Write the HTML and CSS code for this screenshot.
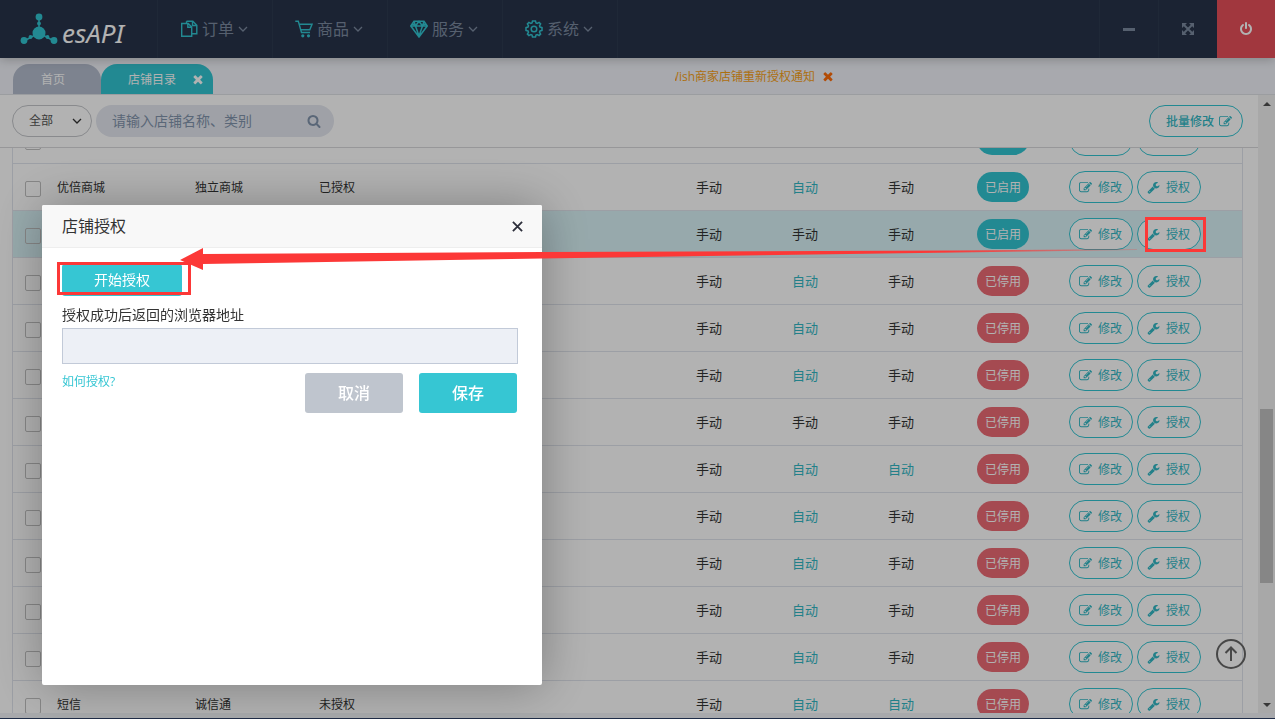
FILE: index.html
```html
<!DOCTYPE html>
<html lang="zh-CN">
<head>
<meta charset="utf-8">
<meta name="viewport" content="width=device-width, initial-scale=1">
<title>esAPI - 店铺目录</title>
<link rel="stylesheet" href="styles.css">
</head>
<body>
<svg class="sprite" aria-hidden="true">
  <symbol id="i-edit" viewBox="0 0 1792 1792"><path d="M888 1184l116-116-152-152-116 116v56h96v96h56zm440-720q-16-16-33 1l-350 350q-17 17-1 33t33-1l350-350q17-17 1-33zm80 594v190q0 119-84.500 203.500t-203.500 84.500h-832q-119 0-203.500-84.500t-84.500-203.500v-832q0-119 84.500-203.500t203.500-84.500h832q63 0 117 25 15 7 18 23 3 17-9 29l-49 49q-14 14-32 8-23-6-45-6h-832q-66 0-113 47t-47 113v832q0 66 47 113t113 47h832q66 0 113-47t47-113v-126q0-13 9-22l64-64q15-15 35-7t20 29zm-96-738l288 288-672 672h-288v-288zm444 132l-92 92-288-288 92-92q28-28 68-28t68 28l152 152q28 28 28 68t-28 68z"/></symbol>
  <symbol id="i-wrench" viewBox="0 0 1792 1792"><path d="M448 1472q0-26-19-45t-45-19-45 19-19 45 19 45 45 19 45-19 19-45zm644-420l-682 682q-37 37-90 37-52 0-91-37l-106-108q-38-36-38-90 0-53 38-91l681-681q39 98 114.500 173.500t173.500 114.500zm634-435q0 39-23 106-47 134-164.500 217.500t-258.500 83.500q-185 0-316.500-131.500t-131.500-316.500 131.500-316.500 316.500-131.500q58 0 121.500 16.500t107.500 46.500q16 11 16 28t-16 28l-293 169v224l193 107q5-3 79-48.500t135.500-81 70.500-35.500q15 0 23.500 10t8.500 25z"/></symbol>
  <symbol id="i-search" viewBox="0 0 1792 1792"><path d="M1216 832q0-185-131.500-316.500t-316.500-131.500-316.500 131.500-131.500 316.500 131.500 316.500 316.500 131.500 316.500-131.500 131.500-316.500zm512 832q0 52-38 90t-90 38q-54 0-90-38l-343-342q-179 124-399 124-143 0-273.500-55.500t-225-150-150-225-55.500-273.500 55.500-273.500 150-225 225-150 273.500-55.500 273.500 55.500 225 150 150 225 55.500 273.500q0 220-124 399l343 343q37 37 37 90z"/></symbol>
  <symbol id="i-times" viewBox="240 340 1312 1312"><path d="M1490 1322q0 40-28 68l-136 136q-28 28-68 28t-68-28l-294-294-294 294q-28 28-68 28t-68-28l-136-136q-28-28-28-68t28-68l294-294-294-294q-28-28-28-68t28-68l136-136q28-28 68-28t68 28l294 294 294-294q28-28 68-28t68 28l136 136q28 28 28 68t-28 68l-294 294 294 294q28 28 28 68z"/></symbol>
  <symbol id="i-power" viewBox="0 0 1792 1792"><path d="M1664 896q0 156-61 298t-164 245-245 164-298 61-298-61-245-164-164-245-61-298q0-182 80.500-343t226.500-270q43-32 95.500-25t83.500 50q32 42 24.500 94.500t-49.500 84.500q-98 74-151.500 181t-53.500 228q0 104 40.500 198.500t109.500 163.500 163.500 109.500 198.500 40.500 198.500-40.500 163.500-109.500 109.500-163.500 40.500-198.500q0-121-53.500-228t-151.500-181q-42-32-49.500-84.500t24.500-94.500q31-43 84-50t95 25q146 109 226.500 270t80.500 343zm-640-768v640q0 52-38 90t-90 38-90-38-38-90v-640q0-52 38-90t90-38 90 38 38 90z"/></symbol>
  <symbol id="i-expand" viewBox="0 0 14 14"><path d="M1 1h5L1 6zM13 1v5L8 1zM1 13V8l5 5zM13 13H8l5-5z"/><path d="M3 3l8 8M11 3l-8 8" fill="none" stroke="currentColor" stroke-width="2"/></symbol>
  <symbol id="i-chevron" viewBox="0 0 10 10"><path d="M1 3l4 4 4-4" fill="none" stroke="currentColor" stroke-width="1.300"/></symbol>
  <symbol id="i-docs" viewBox="0 0 18 18"><path d="M5.500 3.500H1.700v12.800h10V14M6.500 1.200h6.300L16.800 5.200v8.600H11.700V7L8.200 3.500H5.500M6.500 1.200v2.300M12.500 1.200v4.300h4.300M7.800 3.500v3.700h3.900" fill="none" stroke="currentColor" stroke-width="1.400"/></symbol>
  <symbol id="i-cart" viewBox="0 0 18 18"><path d="M.300 1.300H3.300L6.500 12.500H15M4.100 4.300H17L14.800 9.800H5.800" fill="none" stroke="currentColor" stroke-width="1.400"/><circle cx="7.800" cy="15.800" r="1.600"/><circle cx="13.500" cy="15.800" r="1.600"/></symbol>
  <symbol id="i-gem" viewBox="0 0 18 18"><path d="M4 1.200h10L17.200 6 9 17 .800 6zM.800 6h16.400M5.500 6L9 16l3.500-10M4 1.200L5.500 6 9 1.200 12.500 6 14 1.200M2.500 3.500L5.500 6M15.500 3.500L12.500 6" fill="none" stroke="currentColor" stroke-width="1.500"/></symbol>
  <symbol id="i-gear" viewBox="0 0 18 18"><g fill="none" stroke="currentColor" stroke-width="1.500"><path d="M7.500 1h3l.5 2 1.200.5 1.900-1.100 1.500 1.500-1.100 1.900.5 1.200 2 .5v3l-2 .5-.5 1.200 1.100 1.900-1.500 1.500-1.900-1.100-1.200.5-.5 2h-3l-.5-2-1.200-.5-1.900 1.100-1.500-1.500 1.100-1.900L3 11l-2-.5v-3L3 7l.5-1.200-1.100-1.900 1.500-1.500 1.900 1.100L7 3z"/><circle cx="9" cy="9" r="2.800"/></g></symbol>
</svg>

<header class="topbar">
  <a class="logo" href="#">
    <svg class="logo-mark" viewBox="0 0 38 32" aria-hidden="true">
      <path d="M19 3v16M19 20L4 28M19 20l15 8" stroke="currentColor" stroke-width="1.500"/>
      <circle cx="19" cy="20" r="6.500"/><circle cx="19" cy="4" r="3.400"/><circle cx="19" cy="10.500" r="1.900"/>
      <circle cx="4" cy="27.500" r="3.400"/><circle cx="10.500" cy="24" r="1.900"/><circle cx="34" cy="27.500" r="3.400"/><circle cx="27.500" cy="24" r="1.900"/>
    </svg>
    <span>esAPI</span>
  </a>
  <nav class="menu">
    <a href="#"><svg><use href="#i-docs"/></svg><span>订单</span><svg class="chev"><use href="#i-chevron"/></svg></a>
    <a href="#"><svg><use href="#i-cart"/></svg><span>商品</span><svg class="chev"><use href="#i-chevron"/></svg></a>
    <a href="#"><svg><use href="#i-gem"/></svg><span>服务</span><svg class="chev"><use href="#i-chevron"/></svg></a>
    <a href="#"><svg><use href="#i-gear"/></svg><span>系统</span><svg class="chev"><use href="#i-chevron"/></svg></a>
  </nav>
  <div class="window-tools">
    <button type="button" aria-label="最小化"><i class="minus"></i></button>
    <button type="button" aria-label="全屏"><svg><use href="#i-expand"/></svg></button>
    <button type="button" class="exit" aria-label="退出"><svg><use href="#i-power"/></svg></button>
  </div>
</header>

<div class="tabbar">
  <a class="tab" href="#">首页</a>
  <div class="tab active"><a href="#">店铺目录</a><button type="button" aria-label="关闭标签"><svg><use href="#i-times"/></svg></button></div>
  <div class="notice"><a href="#">Wish商家店铺重新授权通知</a><button type="button" aria-label="关闭通知"><svg><use href="#i-times"/></svg></button></div>
</div>

<div class="workspace">
  <main class="page">
    <form class="toolbar">
      <div class="select-box"><select aria-label="类别"><option>全部</option></select><svg><use href="#i-chevron"/></svg></div>
      <div class="search"><input type="text" aria-label="搜索店铺" placeholder="请输入店铺名称、类别"><button type="button" aria-label="搜索"><svg><use href="#i-search"/></svg></button></div>
      <button type="button" class="pill batch">批量修改<svg><use href="#i-edit"/></svg></button>
    </form>
    <div class="list">
      <table>
        <colgroup><col class="c-check"><col class="c-name"><col class="c-type"><col><col class="c-mode"><col class="c-mode"><col class="c-mode-last"><col class="c-status"><col class="c-actions"></colgroup>
        <tbody id="shops"></tbody>
      </table>
    </div>
  </main>
  <div class="scrollbar" aria-hidden="true"><i class="up"></i><div class="track"><i class="before"></i><i class="thumb"></i><i class="after"></i></div><i class="down"></i></div>
</div>
<footer class="statusbar"></footer>

<button type="button" class="to-top" aria-label="回到顶部"><svg viewBox="0 0 32 32"><g fill="none" stroke="currentColor" stroke-width="2"><circle cx="16" cy="16" r="14"/><path d="M16 23V10M10.500 15L16 9.500l5.500 5.500"/></g></svg></button>

<div class="shade"></div>

<section class="dialog" role="dialog" aria-labelledby="dialog-title">
  <header><h1 id="dialog-title">店铺授权</h1><button type="button" aria-label="关闭"><svg viewBox="0 0 12 12"><path d="M1 1l10 10M11 1L1 11" stroke="currentColor" stroke-width="2"/></svg></button></header>
  <form class="dialog-body">
    <button type="button" class="start">开始授权</button>
    <label for="return-url">授权成功后返回的浏览器地址</label>
    <input id="return-url" type="text">
    <div class="dialog-foot">
      <a href="#">如何授权?</a>
      <button type="button" class="cancel">取消</button>
      <button type="button" class="save">保存</button>
    </div>
  </form>
</section>

<div class="mark mark-start"></div>
<div class="mark mark-row"></div>
<svg class="arrow" viewBox="0 0 960 24" aria-hidden="true">
  <defs><linearGradient id="fade"><stop offset="0.800" stop-color="#fc3837"/><stop offset="1" stop-color="#fc3837" stop-opacity="0.200"/></linearGradient></defs>
  <path fill="url(#fade)" d="M0 12L23 0v6L362 4 775 2.500 957 1v1L775 4.500 362 10.500 23 16v6z"/>
</svg>
<script src="app.js"></script>
</body>
</html>
```

FILE: app.js
```js
const A = '自动', M = '手动';
const shops = [
  { modes: [M, A, M], on: true },
  { name: '优倍商城', type: '独立商城', auth: '已授权', modes: [M, A, M], on: true },
  { modes: [M, M, M], on: true, selected: true },
  { modes: [M, A, M] },
  { modes: [M, A, M] },
  { modes: [M, A, M] },
  { modes: [M, M, M] },
  { modes: [M, A, A] },
  { modes: [M, A, M] },
  { modes: [M, A, M] },
  { modes: [M, A, M] },
  { modes: [M, A, M] },
  { name: '短信', type: '诚信通', auth: '未授权', modes: [M, A, A] }
];

document.getElementById('shops').innerHTML = shops.map(s => `
  <tr class="${s.selected ? 'selected' : ''}">
    <td><input type="checkbox" aria-label="选择店铺"></td>
    <td class="info">${s.name || ''}</td><td class="info">${s.type || ''}</td><td class="info">${s.auth || ''}</td>
    ${s.modes.map(m => `<td class="mode${m === A ? ' auto' : ''}">${m}</td>`).join('')}
    <td><button type="button" class="status${s.on ? ' on' : ''}">${s.on ? '已启用' : '已停用'}</button></td>
    <td><div class="actions">
      <button type="button" class="pill"><svg><use href="#i-edit"/></svg>修改</button>
      <button type="button" class="pill"><svg><use href="#i-wrench"/></svg>授权</button>
    </div></td>
  </tr>`).join('');
```

FILE: styles.css
```css
* { box-sizing: border-box; }

body {
  margin: 0;
  height: 100vh;
  display: flex;
  flex-direction: column;
  overflow: hidden;
  background: #fff;
  color: #333;
  font: 12px/18px "Open Sans", "Noto Sans CJK SC", sans-serif;
}

button, input, select { font: inherit; color: inherit; }
button { margin: 0; padding: 0; border: 0; background: none; cursor: pointer; }
a { color: inherit; text-decoration: none; }
svg { fill: currentColor; flex: none; }
.sprite { position: absolute; width: 0; height: 0; }

.topbar {
  position: relative;
  flex: none;
  display: flex;
  height: 58px;
  background: #283349;
  box-shadow: 0 1px 10px rgba(50, 50, 50, 0.3);
}
.logo {
  width: 158px;
  padding: 0 0 0 20px;
  display: flex;
  align-items: center;
  gap: 4px;
  border-right: 1px solid #2d3a50;
  color: #32c5d2;
}
.logo-mark { width: 38px; height: 32px; }
.logo span { color: #fff; font: italic 26px/32px "Noto Sans", sans-serif; padding-top: 8px; }
.menu { display: flex; }
.menu a {
  width: 115px;
  padding-left: 22px;
  display: flex;
  align-items: center;
  gap: 4px;
  border-right: 1px solid #2d3a50;
  color: #7b8aa0;
  font-size: 16px;
  line-height: 24px;
}
.menu svg { width: 18px; height: 18px; color: #32c5d2; }
.menu .chev { width: 10px; height: 10px; color: inherit; }
.window-tools { display: flex; margin-left: auto; }
.window-tools button {
  width: 59px;
  display: flex;
  align-items: center;
  justify-content: center;
  border-left: 1px solid #2d3a50;
  color: #7b8aa0;
}
.window-tools svg { width: 14px; height: 14px; }
.window-tools .exit { width: 58px; border: 0; background: #e7505a; color: #fff; }
.minus { width: 12px; height: 3px; background: currentColor; }

.tabbar {
  flex: none;
  display: flex;
  align-items: flex-end;
  height: 37px;
  padding-left: 13px;
  background: #f1f3f9;
  border-bottom: 1px solid #dfe1e5;
}
.tabbar svg { width: 10px; height: 10px; display: block; }
.tab {
  width: 88px;
  height: 30px;
  padding: 2px 8px 0 0;
  display: flex;
  align-items: center;
  justify-content: center;
  border-radius: 16px 16px 0 0;
  background: #b4bccd;
  color: #fff;
}
.tab.active { width: 112px; padding: 2px 10px 0 27px; justify-content: space-between; background: #32c5d2; }
.notice { margin: 0 auto; padding: 2px 0 0 20px; display: flex; align-items: center; gap: 8px; height: 36px; color: #f7a118; }
.notice a { width: 140px; display: flex; justify-content: flex-end; white-space: nowrap; overflow: hidden; }
.notice button { color: #ff6c0a; }

.workspace { flex: 1; min-height: 0; display: flex; }
.page { flex: 1; min-width: 0; display: flex; flex-direction: column; }
.toolbar {
  flex: none;
  display: flex;
  align-items: center;
  gap: 4px;
  height: 53px;
  padding: 0 15px 0 12px;
  border-bottom: 1px solid #d8d9db;
}
.select-box { position: relative; width: 80px; height: 32px; }
.select-box select {
  width: 100%;
  height: 100%;
  padding: 0 16px;
  appearance: none;
  border: 1px solid #c4c6ca;
  border-radius: 16px;
  background: #fff;
  color: #555;
}
.select-box svg { position: absolute; right: 10px; top: 11px; width: 10px; height: 10px; pointer-events: none; }
.search { width: 238px; height: 32px; padding: 0 13px 0 16px; display: flex; align-items: center; border-radius: 16px; background: #e4e7ef; color: #8294ac; }
.search input { flex: 1; min-width: 0; padding: 0; border: 0; outline: 0; background: none; font-size: 14px; line-height: 20px; }
.search input::placeholder { color: inherit; opacity: 1; }
.search svg { display: block; width: 14px; height: 14px; }

.pill {
  height: 32px;
  padding: 1px 10px 0 9px;
  display: flex;
  align-items: center;
  gap: 6px;
  border: 1px solid #32c5d2;
  border-radius: 16px;
  background: #fff;
  color: #32b8c5;
  white-space: nowrap;
}
.pill svg { width: 13px; height: 13px; }
.batch { margin-left: auto; padding: 1px 10px 0 16px; gap: 5px; font-weight: 500; }

.list { flex: 1; min-height: 0; padding: 0 15px 0 12px; overflow: hidden; }
.list table {
  width: 100%;
  margin-top: -31px;
  table-layout: fixed;
  border-collapse: separate;
  border-spacing: 0;
  border: solid #e0e4ec;
  border-width: 0 1px;
}
.list td { height: 47px; padding: 0 0 0 8px; border-bottom: 1px solid #e0e4ec; vertical-align: middle; }
.list td:first-child { padding-left: 12px; }
.list .info { padding: 2px 0 0 7px; }
.c-check { width: 37px; }
.c-name { width: 138px; }
.c-type { width: 124px; }
.c-mode { width: 96px; }
.c-mode-last { width: 89px; }
.c-status { width: 92px; }
.c-actions { width: 181px; }
.selected td { background: #d9f3f7; }
.mode { font-size: 13px; }
.auto { color: #32b8c5; }
.list input { display: block; width: 16px; height: 16px; margin: 4px 0 0; appearance: none; border: 1px solid #c0c0c0; border-radius: 2px; background: transparent; }
.status { display: block; width: 52px; height: 30px; padding-top: 1px; border-radius: 15px; background: #ed6b75; color: #fff; }
.status.on { background: #32c5d2; }
.actions { display: flex; gap: 4px; }

.scrollbar { width: 17px; display: flex; flex-direction: column; align-items: center; background: #f1f1f1; }
.scrollbar .track { flex: 1; width: 13px; display: flex; flex-direction: column; }
.before { flex: 297; }
.thumb { flex: 174; background: #c1c1c1; }
.after { flex: 113; }
.up, .down { width: 8px; margin: 7px 0 6px; border: 4px solid transparent; border-top: 0; border-bottom-color: #505050; }
.down { border-top: 4px solid #505050; border-bottom: 0; }
.statusbar { flex: none; height: 6px; background: #f1f3f6; border-bottom: 1px solid #2c4066; }

.to-top { position: fixed; right: 28px; bottom: 49px; width: 32px; height: 32px; color: #666; }
.to-top svg { display: block; }

.shade { position: fixed; inset: 0; background: rgba(0, 0, 0, 0.3); }

.dialog {
  position: fixed;
  left: 42px;
  top: 205px;
  width: 500px;
  height: 480px;
  border-radius: 2px;
  background: #fff;
  box-shadow: 1px 1px 50px rgba(0, 0, 0, 0.3);
}
.dialog header { display: flex; align-items: center; justify-content: space-between; height: 43px; padding: 0 19px 0 20px; background: #f8f8f8; border-bottom: 1px solid #eee; border-radius: 2px 2px 0 0; }
.dialog h1 { margin: 0; font-size: 16px; line-height: 24px; font-weight: 400; }
.dialog header svg { display: block; width: 11px; height: 11px; color: #2d2f3b; }
.dialog-body { display: flex; flex-direction: column; align-items: flex-start; padding: 16px 24px 0 20px; }
.start { width: 120px; height: 32px; border-radius: 3px; background: #36c6d3; color: #fff; font-size: 14px; }
.dialog label { margin: 9px 0 3px; font-size: 14px; line-height: 20px; }
.dialog-body input { width: 100%; height: 36px; padding: 6px 12px; border: 1px solid #c2cad8; background: #edf0f6; }
.dialog-foot { width: 100%; display: flex; gap: 16px; padding: 9px 1px 0 0; }
.dialog-foot a { margin-right: auto; color: #36c6d3; }
.dialog-foot button { width: 98px; height: 40px; border-radius: 3px; color: #fff; font-size: 16px; font-weight: 500; }
.dialog-foot .cancel { background: #bfc5ce; }
.dialog-foot .save { background: #36c6d3; }

.mark { position: fixed; border: 3px solid #fc3837; pointer-events: none; }
.mark-start { left: 57px; top: 262px; width: 134px; height: 33px; }
.mark-row { left: 1145px; top: 217px; width: 61px; height: 35px; }
.arrow { position: fixed; left: 180px; top: 248px; width: 960px; height: 24px; pointer-events: none; }
```
